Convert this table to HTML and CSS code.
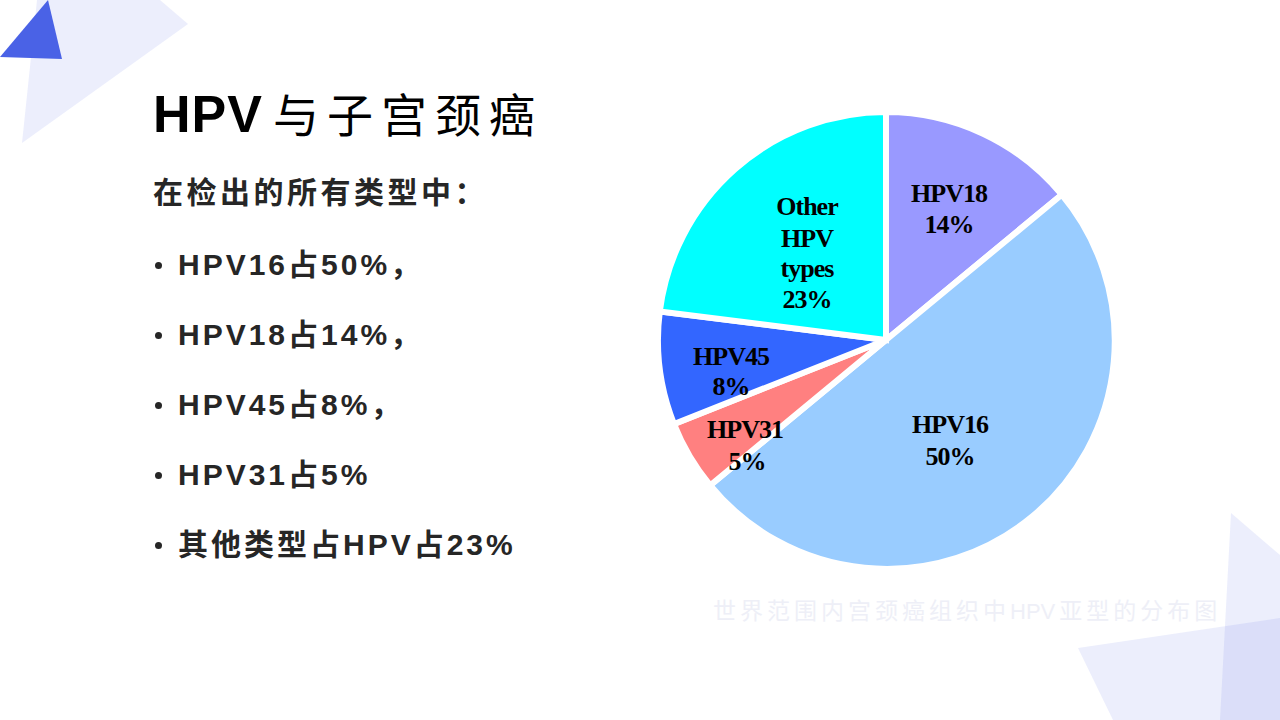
FILE: index.html
```html
<!DOCTYPE html>
<html lang="zh-CN">
<head>
<meta charset="utf-8">
<title>HPV与子宫颈癌</title>
<link rel="stylesheet" href="styles.css">
</head>
<body>
<div class="slide">
  <svg class="bg" width="1280" height="720" viewBox="0 0 1280 720" aria-hidden="true">
    <polygon class="tint" points="37,0 160,0 188,24 22,143"/>
    <polygon class="accent" points="48,0 0,57 62,59"/>
    <polygon class="tint" points="1231,513 1280,555 1280,720 1220,720"/>
    <polygon class="tint" points="1078,648 1280,618 1280,720 1113,720"/>
  </svg>
  <div class="content">
    <div class="text-col">
      <h1 class="title"><span class="title-latin">HPV</span><span class="title-cjk">与子宫颈癌</span></h1>
      <p class="lead">在检出的所有类型中：</p>
      <ul class="list">
        <li>HPV16占50%，</li>
        <li>HPV18占14%，</li>
        <li>HPV45占8%，</li>
        <li>HPV31占5%</li>
        <li>其他类型占HPV占23%</li>
      </ul>
    </div>
    <div class="chart-col">
      <svg class="pie" width="460" height="465" viewBox="0 0 460 465">
        <g class="slices">
          <path fill="#9999FF" d="M231,232 L231,4 A228,228 0 0 1 406.7,86.7 Z"/>
          <path fill="#99CCFF" d="M231,232 L406.7,86.7 A228,228 0 1 1 55.3,377.3 Z"/>
          <path fill="#FF8080" d="M231,232 L55.3,377.3 A228,228 0 0 1 19,316 Z"/>
          <path fill="#3366FF" d="M231,232 L19,316 A228,228 0 0 1 4.8,203.4 Z"/>
          <path fill="#00FFFF" d="M231,232 L4.8,203.4 A228,228 0 0 1 231,4 Z"/>
        </g>
        <g class="labels">
          <text x="294" y="94">HPV18</text>
          <text x="294" y="125">14%</text>
          <text x="152" y="107">Other</text>
          <text x="152" y="139">HPV</text>
          <text x="152" y="169">types</text>
          <text x="152" y="200">23%</text>
          <text x="76" y="257">HPV45</text>
          <text x="76" y="287">8%</text>
          <text x="90" y="330">HPV31</text>
          <text x="92" y="362">5%</text>
          <text x="295" y="325">HPV16</text>
          <text x="295" y="357">50%</text>
        </g>
      </svg>
      <p class="caption">世界范围内宫颈癌组织中<span class="caption-latin">HPV</span>亚型的分布图</p>
    </div>
  </div>
</div>
</body>
</html>
```

FILE: styles.css
```css
html, body {
  margin: 0;
  padding: 0;
  background: #ffffff;
}

.slide {
  position: relative;
  width: 1280px;
  height: 720px;
  overflow: hidden;
  background: #ffffff;
  font-family: "Liberation Sans", "Noto Sans CJK SC", sans-serif;
}

.bg {
  position: absolute;
  left: 0;
  top: 0;
}

.tint {
  fill: rgba(65, 85, 225, 0.1);
}

.accent {
  fill: #4a62e6;
}

.content {
  position: relative;
  display: flex;
  padding: 82px 0 0 153px;
}

.text-col {
  width: 502px;
  flex: none;
}

.title {
  margin: 0;
  height: 60px;
  line-height: 60px;
  font-size: 52px;
  font-weight: 700;
  color: #000000;
  white-space: nowrap;
}

.title-latin {
  font-family: "Liberation Sans", sans-serif;
  letter-spacing: 1px;
}

.title-cjk {
  font-family: "Noto Sans CJK SC", sans-serif;
  font-weight: 400;
  font-size: 46px;
  letter-spacing: 8px;
  margin-left: 10px;
}

.lead {
  margin: 31px 0 0;
  height: 40px;
  line-height: 40px;
  font-size: 30px;
  font-weight: 700;
  color: #262626;
  letter-spacing: 3.5px;
  white-space: nowrap;
}

.list {
  list-style: none;
  margin: 17px 0 0;
  padding: 0;
}

.list li {
  display: flex;
  align-items: center;
  height: 70px;
  line-height: 36px;
  font-size: 30px;
  font-weight: 700;
  color: #262626;
  letter-spacing: 3px;
  white-space: nowrap;
}

.list li::before {
  content: "";
  flex: none;
  width: 7px;
  height: 7px;
  border-radius: 50%;
  background: #262626;
  margin: 0 16px 0 2px;
}

.chart-col {
  display: flex;
  flex-direction: column;
  flex: none;
  width: 600px;
  margin-top: 26px;
}

.pie {
  display: block;
}

.slices path {
  stroke: #ffffff;
  stroke-width: 6;
  stroke-linejoin: miter;
}

.labels text {
  font-family: "Liberation Serif", serif;
  font-weight: 700;
  font-size: 26px;
  letter-spacing: -1px;
  fill: #000000;
  text-anchor: middle;
}

.caption {
  margin: 21px 0 0 58px;
  height: 30px;
  line-height: 30px;
  font-family: "Noto Sans CJK SC", sans-serif;
  font-size: 23px;
  color: #eeeff7;
  letter-spacing: 4px;
  white-space: nowrap;
}

.caption-latin {
  font-family: "Liberation Sans", sans-serif;
  font-size: 22px;
  letter-spacing: 0;
  margin-right: 4px;
}
```
